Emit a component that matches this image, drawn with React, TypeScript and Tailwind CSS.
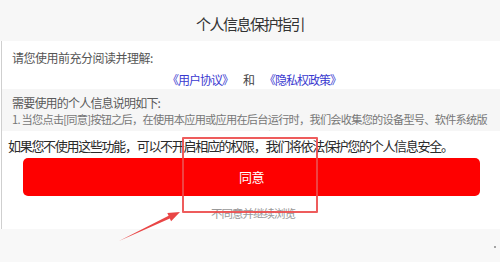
import React from "react";

const cjk = { fontFamily: '"Noto Sans CJK SC", "Noto Sans", sans-serif' };

function Arrow() {
  // red annotation arrow pointing up at the highlighted button
  return (
    <svg className="absolute left-0 top-0 pointer-events-none" width="500" height="262" viewBox="0 0 500 262">
      <polygon
        points="119,241 169.8,218.5 171.1,221.2 180,212 167.3,213 168.6,215.7"
        fill="#e94646"
      />
    </svg>
  );
}

export default function App() {
  return (
    <div className="relative w-[500px] h-[262px] overflow-hidden bg-white" style={cjk}>
      {/* Header */}
      <div className="h-[41px] pt-[8px] flex items-center justify-center bg-[#f7f7f7]">
        <span className="text-[15px] tracking-[-1.5px] text-[#333]">个人信息保护指引</span>
      </div>

      {/* Body */}
      <div className="ml-px border-l border-[#cfcfcf] bg-white">
        <div className="pt-[8px] pl-[10px] h-[26px] leading-[18px] text-[12px] tracking-[-0.5px] text-[#555]">
          请您使用前充分阅读并理解:
        </div>
        <div className="mt-[4px] h-[18px] leading-[18px] flex justify-center items-center gap-[10px] text-[12px] tracking-[-1px] pl-[6px]">
          <span className="text-[#3a3ad0]">《用户协议》</span>
          <span className="text-[#444]">和</span>
          <span className="text-[#3a3ad0]">《隐私权政策》</span>
        </div>

        <div className="h-[42px] overflow-hidden bg-[#f6f6f6] pl-[10px] pt-[6px]">
          <div className="leading-[16px] text-[12px] tracking-[-0.8px] text-[#5a5a5a]">需要使用的个人信息说明如下:</div>
          <div className="leading-[17px] text-[11.2px] tracking-[-0.75px] text-[#777] whitespace-nowrap">
            1. 当您点击[同意]按钮之后，在使用本应用或应用在后台运行时，我们会收集您的设备型号、软件系统版
          </div>
          <div className="leading-[17px] text-[11.2px] tracking-[-0.75px] text-[#777] whitespace-nowrap">
            本、软件安装列表、MAC 地址、端口、设备标识符等信息、IP 地址、IMEI、设备序列号用于
          </div>
        </div>

        <div className="pt-[5px] pb-[7px]">
          <div className="pl-[6px] h-[20px] leading-[20px] text-[13px] tracking-[-1.3px] text-[#2a2a2a] whitespace-nowrap">
            如果您不使用这些功能，可以不开启相应的权限，我们将依法保护您的个人信息安全。
          </div>
          <button className="mt-[2px] ml-[21px] w-[457px] h-[38px] rounded-[5px] bg-[#fe0000] text-white text-[13px] tracking-[-0.5px] flex items-center justify-center">
            同意
          </button>
          <div className="mt-[8px] h-[18px] leading-[18px] text-center text-[11.5px] tracking-[-1px] text-[#999] pl-[4px]">
            不同意并继续浏览
          </div>
        </div>
      </div>

      {/* Bottom band */}
      <div className="h-[33px] bg-[#f8f8f8] flex justify-end items-center pr-[4px]">
        <span className="w-[2px] h-[2px] rounded-full bg-[#888] mt-[3px]" />
      </div>

      {/* Annotation overlay */}
      <div className="absolute left-[182px] top-[137px] w-[136px] h-[76px] border-2 border-[#ec4a4a]/90 rounded-[1px] pointer-events-none" />
      <Arrow />
    </div>
  );
}
